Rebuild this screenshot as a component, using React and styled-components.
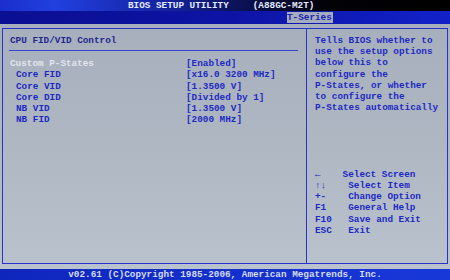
import React from "react";
import styled, { createGlobalStyle } from "styled-components";

const Global = createGlobalStyle`
  html, body { margin: 0; padding: 0; background: #a9b1bd; }
  body { width: 450px; height: 280px; overflow: hidden; }
  #root { width: 450px; height: 280px; }
`;

const Screen = styled.div`
  width: 450px;
  height: 280px;
  display: flex;
  flex-direction: column;
  font-family: "Liberation Mono", "DejaVu Sans Mono", monospace;
  font-weight: bold;
  font-size: 9.33px;
  line-height: 11.2px;
  white-space: pre;
`;

const TitleBar = styled.div`
  height: 11px;
  flex: none;
  display: flex;
  align-items: center;
  padding-left: 128px;
  color: #e6ebff;
  background: linear-gradient(90deg, #1a2ecc 0%, #2140de 12%, #1c34c8 22%, #14239a 38%, #0a1050 55%, #020208 72%, #000 100%);
`;

const Model = styled.span`
  margin-left: 24px;
`;

const MenuBar = styled.div`
  height: 13px;
  flex: none;
  display: flex;
  align-items: stretch;
  padding-left: 287px;
  background: linear-gradient(90deg, #0b0f92 0%, #0d13a4 50%, #1222c8 100%);
`;

const Tab = styled.div`
  display: flex;
  align-items: center;
  padding: 0 1px 0 0;
  margin: 1px 0;
  background: #a4adbd;
  color: #1a24b4;
`;

const Main = styled.div`
  flex: 1;
  padding: 4px 2px 5px 2px;
  background: linear-gradient(180deg, #a7afbc 0%, #afb7c3 50%, #bac2cd 100%);
`;

const Frame = styled.div`
  height: 100%;
  box-sizing: border-box;
  border: 1px solid #2434c8;
  display: grid;
  grid-template-columns: 303px 1px 1fr;
`;

const Divider = styled.div`
  background: #2434c8;
`;

const LeftPane = styled.div`
  padding: 6px 8px 0 6px;
  color: #1c28bc;
`;

const SectionTitle = styled.div`
  padding-left: 1px;
  color: #1e2690;
`;

const Rule = styled.div`
  height: 1px;
  background: #3444cc;
  margin: 4px 0 7px 0;
`;

const Row = styled.div`
  display: grid;
  grid-template-columns: 177px 1fr;
  color: #1c2ac4;
`;

const Label = styled.span`
  padding-left: ${(p) => (p.$sub ? "7px" : "1px")};
  color: ${(p) => (p.$muted ? "#e2e6ee" : "inherit")};
`;

const RightPane = styled.div`
  padding: 6px 4px 0 8px;
  display: flex;
  flex-direction: column;
  color: #1c2ac4;
`;

const Help = styled.div`
  flex: 1;
`;

const Keys = styled.div`
  display: grid;
  grid-template-columns: 27.6px 1fr;
  margin-bottom: 27px;
`;

const Footer = styled.div`
  height: 11px;
  flex: none;
  display: flex;
  align-items: center;
  justify-content: center;
  color: #d6dcf4;
  background: linear-gradient(90deg, #0f26bc 0%, #1430cc 50%, #1838d8 100%);
`;

const rows = [
  { label: "Custom P-States", value: "[Enabled]", muted: true },
  { label: "Core FID", value: "[x16.0 3200 MHz]", sub: true },
  { label: "Core VID", value: "[1.3500 V]", sub: true },
  { label: "Core DID", value: "[Divided by 1]", sub: true },
  { label: "NB VID", value: "[1.3500 V]", sub: true },
  { label: "NB FID", value: "[2000 MHz]", sub: true },
];

const help = [
  "Tells BIOS whether to",
  "use the setup options",
  "below this to",
  "configure the",
  "P-States, or whether",
  "to configure the",
  "P-States automatically",
];

const keys = [
  ["\u2190", "Select Screen"],
  ["\u2191\u2193", " Select Item"],
  ["+-", " Change Option"],
  ["F1", " General Help"],
  ["F10", " Save and Exit"],
  ["ESC", " Exit"],
];

export default function App() {
  return (
    <>
      <Global />
      <Screen>
        <TitleBar>
          BIOS SETUP UTILITY<Model>(A88GC-M2T)</Model>
        </TitleBar>
        <MenuBar>
          <Tab>T-Series</Tab>
        </MenuBar>
        <Main>
          <Frame>
            <LeftPane>
              <SectionTitle>CPU FID/VID Control</SectionTitle>
              <Rule />
              {rows.map((r) => (
                <Row key={r.label}>
                  <Label $sub={r.sub} $muted={r.muted}>{r.label}</Label>
                  <span>{r.value}</span>
                </Row>
              ))}
            </LeftPane>
            <Divider />
            <RightPane>
              <Help>
                {help.map((h) => (
                  <div key={h}>{h}</div>
                ))}
              </Help>
              <Keys>
                {keys.map(([k, a]) => (
                  <React.Fragment key={k}>
                    <span>{k}</span>
                    <span>{a}</span>
                  </React.Fragment>
                ))}
              </Keys>
            </RightPane>
          </Frame>
        </Main>
        <Footer>v02.61 (C)Copyright 1985-2006, American Megatrends, Inc.</Footer>
      </Screen>
    </>
  );
}
